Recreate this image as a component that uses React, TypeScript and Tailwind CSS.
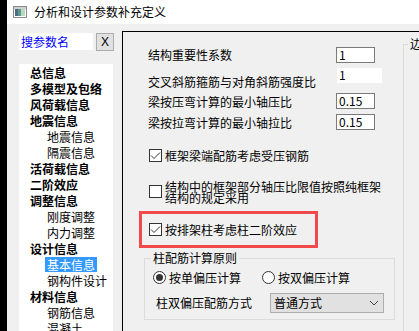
import type { ReactNode } from 'react'

const TREE = [
  { label: '总信息', sub: false },
  { label: '多模型及包络', sub: false },
  { label: '风荷载信息', sub: false },
  { label: '地震信息', sub: false },
  { label: '地震信息', sub: true },
  { label: '隔震信息', sub: true },
  { label: '活荷载信息', sub: false },
  { label: '二阶效应', sub: false },
  { label: '调整信息', sub: false },
  { label: '刚度调整', sub: true },
  { label: '内力调整', sub: true },
  { label: '设计信息', sub: false },
  { label: '基本信息', sub: true, active: true },
  { label: '钢构件设计', sub: true },
  { label: '材料信息', sub: false },
  { label: '钢筋信息', sub: true },
  { label: '混凝土', sub: true },
]

function Check({ checked }: { checked?: boolean }) {
  return (
    <span className="flex h-[13px] w-[13px] shrink-0 items-center justify-center border border-[#333333] bg-white">
      {checked && (
        <svg width="11" height="11" viewBox="0 0 11 11">
          <path d="M1 5.5 L4 8.5 L10 2.5" fill="none" stroke="#333333" strokeWidth="1" />
        </svg>
      )}
    </span>
  )
}

function Radio({ on }: { on?: boolean }) {
  return (
    <span className="flex h-[13px] w-[13px] shrink-0 items-center justify-center rounded-full border border-[#333333] bg-white">
      {on && <span className="h-[7px] w-[7px] rounded-full bg-[#333333]" />}
    </span>
  )
}

function ParamRow({ label, value, className, boxed = true }: { label: string; value: string; className: string; boxed?: boolean }) {
  return (
    <div className={`flex pl-[25px] ${className}`}>
      <span className="w-[188px] shrink-0 leading-[16px]">{label}</span>
      {boxed ? (
        <span className="flex h-[16px] w-[39px] items-center border border-[#7a7a7a] bg-white pl-[2px] leading-[14px]">{value}</span>
      ) : (
        <span className="ml-[1px] h-[15px] w-[45px] bg-white pl-[2px] leading-[14px]">{value}</span>
      )}
    </div>
  )
}

function Legend({ children, className }: { children: ReactNode; className: string }) {
  return <legend className={`px-[2px] leading-[16px] ${className}`}>{children}</legend>
}

export default function App() {
  return (
    <div className="flex h-[331px] w-[419px] overflow-hidden bg-[#f0f0f0] font-['Noto_Sans_CJK_SC','Noto_Sans',sans-serif] text-[12px] text-black">
      <div className="w-[7px] shrink-0 bg-black" />
      <div className="flex min-w-0 flex-1 flex-col">
        {/* title bar */}
        <div className="flex h-[24px] shrink-0 items-center bg-white pl-[6px]">
          <svg width="14" height="12" viewBox="0 0 14 12">
            <rect x="0.5" y="0.5" width="13" height="11" fill="#ffffff" stroke="#8a8a8a" />
            <rect x="1" y="1" width="12" height="2" fill="#cfcfcf" />
            <rect x="2" y="3" width="3" height="7" fill="#4a6b8a" />
            <rect x="5" y="3" width="3" height="7" fill="#5f9a86" />
            <rect x="8" y="3" width="4" height="7" fill="#b9d8c4" />
          </svg>
          <span className="ml-[7px] leading-[16px]">分析和设计参数补充定义</span>
        </div>

        <div className="flex min-h-0 flex-1">
          {/* left: search + tree */}
          <div className="flex w-[115px] shrink-0 flex-col pl-[12px] pt-[9px]">
            <div className="flex items-start">
              <div className="h-[17px] w-[74px] bg-white pl-[2px] leading-[17px] text-[#0000ff]">搜参数名</div>
              <div className="ml-[3px] flex h-[18px] w-[18px] items-center justify-center border border-[#adadad] bg-[#e1e1e1] font-['Liberation_Sans',sans-serif] text-[12px]">
                X
              </div>
            </div>
            <div className="mt-[13px] flex w-[94px] flex-1 flex-col bg-white">
              {TREE.map((item, i) => (
                <div key={i} className={`flex h-[16px] shrink-0 items-center ${item.sub ? 'pl-[26px]' : 'pl-[9px] font-bold'}`}>
                  <span className={`whitespace-nowrap px-[2px] leading-[15px] ${item.active ? 'bg-[#3399ff] text-white' : ''}`}>{item.label}</span>
                </div>
              ))}
            </div>
          </div>

          {/* right: parameters */}
          <div className="mt-[7px] flex min-w-0 flex-1 border-l border-t border-black">
            <div className="flex w-[280px] shrink-0 flex-col">
              <ParamRow className="mt-[15px] h-[16px] items-center" label="结构重要性系数" value="1" />
              <ParamRow className="mt-[5px] h-[19px] items-start [&>span:first-child]:pt-[6px]" label="交叉斜筋箍筋与对角斜筋强度比" value="1" boxed={false} />
              <ParamRow className="mt-[6px] h-[16px] items-center [&>span:first-child]:pt-[2px]" label="梁按压弯计算的最小轴压比" value="0.15" />
              <ParamRow className="mt-[5px] h-[16px] items-center [&>span:first-child]:pt-[2px]" label="梁按拉弯计算的最小轴拉比" value="0.15" />

              <div className="mt-[19px] flex h-[13px] items-center pl-[26px]">
                <Check checked />
                <span className="ml-[3px] leading-[13px]">框架梁端配筋考虑受压钢筋</span>
              </div>

              <div className="mt-[18px] flex h-[23px] items-center pl-[26px]">
                <Check />
                <span className="ml-[3px] w-[216px] leading-[11px]">结构中的框架部分轴压比限值按照纯框架结构的规定采用</span>
              </div>

              <div className="ml-[16px] mt-[8px] flex h-[37px] w-[179px] items-center border-[3px] border-[#f24a4a] pl-[7px]">
                <Check checked />
                <span className="ml-[3px] leading-[13px]">按排架柱考虑柱二阶效应</span>
              </div>

              <fieldset className="ml-[21px] mt-[2px] h-[70px] w-[251px] border border-[#dcdcdc]">
                <Legend className="ml-[6px]">柱配筋计算原则</Legend>
                <div className="mt-[5px] flex h-[13px] items-center pl-[8px]">
                  <Radio on />
                  <span className="ml-[3px] leading-[13px]">按单偏压计算</span>
                  <span className="ml-[21px]">
                    <Radio />
                  </span>
                  <span className="ml-[3px] leading-[13px]">按双偏压计算</span>
                </div>
                <div className="mt-[9px] flex h-[20px] items-center pl-[11px]">
                  <span className="w-[96px] leading-[16px]">柱双偏压配筋方式</span>
                  <div className="ml-[18px] flex h-[20px] w-[114px] items-center justify-between border border-[#adadad] bg-[#e1e1e1] pl-[3px] pr-[4px]">
                    <span className="leading-[16px]">普通方式</span>
                    <svg width="10" height="6" viewBox="0 0 10 6">
                      <path d="M1 1 L5 5 L9 1" fill="none" stroke="#444444" strokeWidth="1" />
                    </svg>
                  </div>
                </div>
              </fieldset>
            </div>

            <fieldset className="mt-[4px] h-[400px] w-[100px] shrink-0 border border-[#dcdcdc]">
              <Legend className="ml-[4px]">边界条件</Legend>
            </fieldset>
          </div>
        </div>
      </div>
    </div>
  )
}
